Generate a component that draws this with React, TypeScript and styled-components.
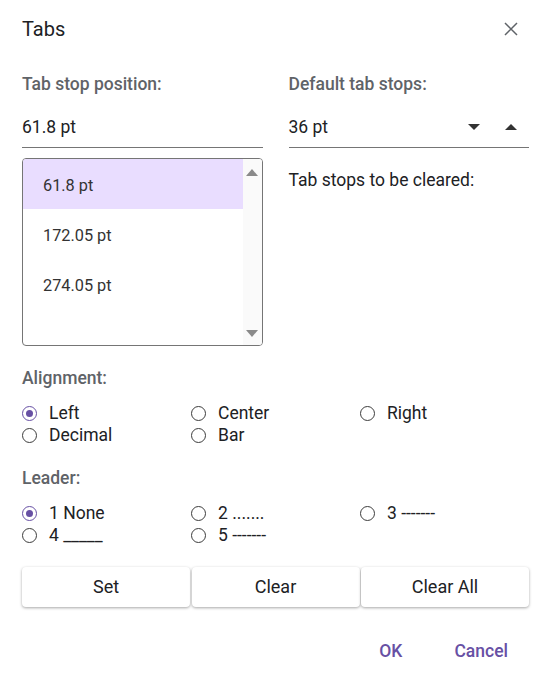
import React, { useState } from "react";
import styled, { createGlobalStyle, css } from "styled-components";

const GlobalStyle = createGlobalStyle`
  html, body {
    margin: 0;
    padding: 0;
    background: #ffffff;
    font-family: Roboto, "Noto Sans", Arial, sans-serif;
  }
  * { box-sizing: border-box; }
`;

const Dialog = styled.div`
  width: 547px;
  padding: 17px 18px 0 22px;
`;

const Header = styled.div`
  display: flex;
  align-items: center;
  justify-content: space-between;
  height: 24px;
`;

const Title = styled.div`
  font-size: 20px;
  color: #202124;
  line-height: 24px;
`;

const CloseBtn = styled.button`
  border: 0;
  background: none;
  padding: 0;
  width: 24px;
  height: 24px;
  margin-right: 6px;
  display: flex;
  align-items: center;
  justify-content: center;
  cursor: pointer;
`;

const Columns = styled.div`
  display: grid;
  grid-template-columns: 1fr 1fr;
  column-gap: 26px;
  margin-top: 33px;
`;

const Column = styled.div`
  display: flex;
  flex-direction: column;
`;

const Label = styled.div`
  font-size: 17.5px;
  font-weight: 500;
  color: #5f6368;
  line-height: 20px;
`;

const Field = styled.div`
  display: flex;
  align-items: center;
  height: 41px;
  margin-top: 13px;
  border-bottom: 1px solid #757575;
`;

const FieldValue = styled.div`
  flex: 1;
  font-size: 17.5px;
  color: #202124;
`;

const Spin = styled.button<{ up?: boolean }>`
  border: 0;
  background: none;
  padding: 0;
  width: 24px;
  height: 24px;
  display: flex;
  align-items: center;
  justify-content: center;
  margin-left: 13px;
  margin-right: ${({ up }) => (up ? "6px" : "0")};
  &::after {
    content: "";
    width: 0;
    height: 0;
    border-left: 6px solid transparent;
    border-right: 6px solid transparent;
    ${({ up }) =>
      up
        ? css`border-bottom: 6px solid #333;`
        : css`border-top: 6px solid #333;`}
  }
`;

const ListBox = styled.div`
  margin-top: 10px;
  height: 188px;
  border: 1px solid #757575;
  border-radius: 4px;
  display: flex;
  overflow: hidden;
`;

const Items = styled.div`
  flex: 1;
  display: flex;
  flex-direction: column;
`;

const Item = styled.div<{ selected?: boolean }>`
  height: 50px;
  display: flex;
  align-items: center;
  padding: 2px 0 0 20px;
  font-size: 16.3px;
  color: #333;
  background: ${({ selected }) => (selected ? "#e9ddff" : "transparent")};
`;

const ScrollTrack = styled.div`
  width: 19px;
  background: #fafafa;
  display: flex;
  flex-direction: column;
  justify-content: space-between;
  align-items: center;
  padding: 10px 0 8px;
`;

const Arrow = styled.div<{ up?: boolean }>`
  width: 0;
  height: 0;
  border-left: 6px solid transparent;
  border-right: 6px solid transparent;
  ${({ up }) =>
    up
      ? css`border-bottom: 7px solid #8a8a8a;`
      : css`border-top: 7px solid #8a8a8a;`}
`;

const Plain = styled.div`
  margin-top: 22px;
  font-size: 17.5px;
  color: #202124;
  line-height: 20px;
`;

const Section = styled.div`
  margin-top: 22px;
`;

const RadioGrid = styled.div`
  display: grid;
  grid-template-columns: 169px 169px 169px;
  margin-top: 14px;
`;

const RadioItem = styled.label`
  display: flex;
  align-items: center;
  height: 22px;
  gap: 12px;
  font-size: 17.5px;
  color: #202124;
  cursor: pointer;
`;

const Circle = styled.span<{ checked?: boolean }>`
  width: 15px;
  height: 15px;
  flex-shrink: 0;
  border-radius: 50%;
  border: 1.5px solid ${({ checked }) => (checked ? "#6750a4" : "#3c3c3c")};
  display: flex;
  align-items: center;
  justify-content: center;
  &::after {
    content: "";
    width: 7px;
    height: 7px;
    border-radius: 50%;
    background: ${({ checked }) => (checked ? "#6750a4" : "transparent")};
  }
`;

const ButtonRow = styled.div`
  display: grid;
  grid-template-columns: 168px 168px 168px;
  column-gap: 1.5px;
  margin-top: 21px;
`;

const ActionBtn = styled.button`
  height: 40px;
  border: 0;
  border-radius: 4px;
  background: #fff;
  box-shadow: 0 1px 3px rgba(0, 0, 0, 0.35);
  font-family: inherit;
  font-size: 18px;
  color: #202124;
  padding: 0 0 2px;
  cursor: pointer;
`;

const Footer = styled.div`
  display: flex;
  justify-content: flex-end;
  gap: 52px;
  margin-top: 33px;
  padding-right: 21px;
`;

const TextBtn = styled.button`
  border: 0;
  background: none;
  padding: 0;
  height: 22px;
  font-family: inherit;
  font-size: 17.5px;
  font-weight: 500;
  color: #6750a4;
  cursor: pointer;
`;

const alignments = ["Left", "Center", "Right", "Decimal", "Bar"];
const leaders = ["1 None", "2 .......", "3 -------", "4 _____", "5 -------"];
const stops = ["61.8 pt", "172.05 pt", "274.05 pt"];

const RadioGroup = ({ options, value, onChange }: { options: string[]; value: string; onChange: (v: string) => void }) => (
  <RadioGrid>
    {options.map((o) => (
      <RadioItem key={o} onClick={() => onChange(o)}>
        <Circle checked={value === o} />
        {o}
      </RadioItem>
    ))}
  </RadioGrid>
);

const App = () => {
  const [align, setAlign] = useState("Left");
  const [leader, setLeader] = useState("1 None");
  const [selected, setSelected] = useState(0);

  return (
    <>
      <GlobalStyle />
      <Dialog>
        <Header>
          <Title>Tabs</Title>
          <CloseBtn aria-label="Close">
            <svg width="14" height="14" viewBox="0 0 14 14">
              <path d="M1 1 L13 13 M13 1 L1 13" stroke="#5f6368" strokeWidth="1.5" />
            </svg>
          </CloseBtn>
        </Header>

        <Columns>
          <Column>
            <Label>Tab stop position:</Label>
            <Field>
              <FieldValue>61.8 pt</FieldValue>
            </Field>
            <ListBox>
              <Items>
                {stops.map((s, i) => (
                  <Item key={s} selected={i === selected} onClick={() => setSelected(i)}>
                    {s}
                  </Item>
                ))}
              </Items>
              <ScrollTrack>
                <Arrow up />
                <Arrow />
              </ScrollTrack>
            </ListBox>
          </Column>
          <Column>
            <Label>Default tab stops:</Label>
            <Field>
              <FieldValue>36 pt</FieldValue>
              <Spin aria-label="Decrease" />
              <Spin up aria-label="Increase" />
            </Field>
            <Plain>Tab stops to be cleared:</Plain>
          </Column>
        </Columns>

        <Section>
          <Label>Alignment:</Label>
          <RadioGroup options={alignments} value={align} onChange={setAlign} />
        </Section>

        <Section>
          <Label>Leader:</Label>
          <RadioGroup options={leaders} value={leader} onChange={setLeader} />
        </Section>

        <ButtonRow>
          <ActionBtn>Set</ActionBtn>
          <ActionBtn>Clear</ActionBtn>
          <ActionBtn>Clear All</ActionBtn>
        </ButtonRow>

        <Footer>
          <TextBtn>OK</TextBtn>
          <TextBtn>Cancel</TextBtn>
        </Footer>
      </Dialog>
    </>
  );
};

export default App;
